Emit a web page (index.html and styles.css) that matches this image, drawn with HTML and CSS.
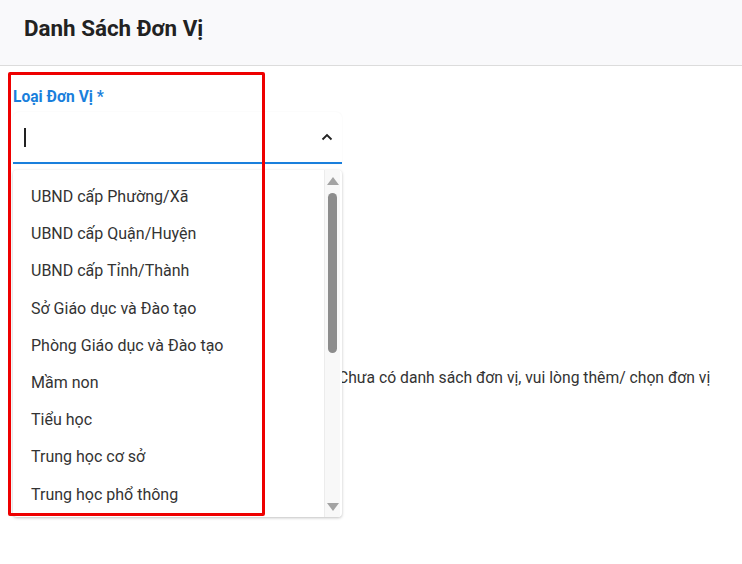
FILE: index.html
```html
<!DOCTYPE html>
<html lang="vi">
<head>
    <meta charset="utf-8">
    <title>Danh Sách Đơn Vị</title>
    <link rel="stylesheet" href="styles.css">
</head>
<body>
    <header class="page-header">
        <h1>Danh Sách Đơn Vị</h1>
    </header>
    <main class="content">
        <div class="filter">
            <label class="filter-label">Loại Đơn Vị *</label>
            <div class="select">
                <span class="caret"></span>
                <svg class="chevron" width="12" height="8" viewBox="0 0 12 8">
                    <path d="M1.5 6.5 L6 2 L10.5 6.5" fill="none" stroke="#222" stroke-width="1.8"/>
                </svg>
            </div>
            <div class="dropdown">
                <ul class="options">
                    <li>UBND cấp Phường/Xã</li>
                    <li>UBND cấp Quận/Huyện</li>
                    <li>UBND cấp Tỉnh/Thành</li>
                    <li>Sở Giáo dục và Đào tạo</li>
                    <li>Phòng Giáo dục và Đào tạo</li>
                    <li>Mầm non</li>
                    <li>Tiểu học</li>
                    <li>Trung học cơ sở</li>
                    <li>Trung học phổ thông</li>
                </ul>
                <div class="scrollbar">
                    <span class="arrow-up"></span>
                    <div class="track"><div class="thumb"></div></div>
                    <span class="arrow-down"></span>
                </div>
            </div>
            <div class="highlight"></div>
        </div>
        <p class="empty">Chưa có danh sách đơn vị, vui lòng thêm/ chọn đơn vị</p>
    </main>
</body>
</html>
```

FILE: styles.css
```css
html, body {
    height: 100%;
}
body {
    font-family: Roboto, "Liberation Sans", sans-serif;
    margin: 0;
    background: #fff;
    color: #333;
    min-height: 564px;
}
.page-header {
    height: 66px;
    box-sizing: border-box;
    background: #f9f9fb;
    border-bottom: 1px solid #dcdcdc;
    padding: 15px 0 0 24px;
}
.page-header h1 {
    margin: 0;
    font-size: 22.4px;
    line-height: 26px;
    font-weight: 700;
    color: #222;
}
.content {
    padding: 22px 13px 0;
}
.filter {
    position: relative;
    width: 329px;
}
.filter-label {
    display: block;
    font-size: 15.6px;
    line-height: 18px;
    font-weight: 700;
    color: #1a7fdc;
    margin-bottom: 6px;
}
.select {
    height: 50px;
    border-bottom: 2px solid #1a7fdc;
    border-radius: 6px 6px 0 0;
    box-shadow: 0 0 2px rgba(0,0,0,0.06);
    display: flex;
    align-items: center;
    justify-content: space-between;
    padding: 0 9px 0 11px;
}
.caret {
    width: 2px;
    height: 19px;
    background: #222;
}
.dropdown {
    position: absolute;
    top: 82px;
    left: 0;
    width: 329px;
    height: 347px;
    display: flex;
    background: #fff;
    border-radius: 4px;
    box-shadow: 0 1px 3px rgba(0,0,0,0.25);
    overflow: hidden;
}
.options {
    flex: 1;
    margin: 0;
    padding: 8px 0 0;
    list-style: none;
    overflow: hidden;
}
.options li {
    height: 37.2px;
    line-height: 37px;
    padding-left: 18px;
    font-size: 16px;
    color: #333;
}
.scrollbar {
    width: 15px;
    margin-right: 2px;
    background: #f8f8f8;
    border-left: 1px solid #ececec;
    display: flex;
    flex-direction: column;
    align-items: center;
    padding: 7px 0 6px;
}
.arrow-up, .arrow-down {
    width: 0;
    height: 0;
    border-left: 6px solid transparent;
    border-right: 6px solid transparent;
}
.arrow-up {
    border-bottom: 8px solid #a3a3a3;
}
.arrow-down {
    border-top: 8px solid #a3a3a3;
}
.track {
    flex: 1;
    width: 100%;
    display: flex;
    justify-content: center;
    padding-top: 8px;
}
.thumb {
    width: 9px;
    height: 160px;
    border-radius: 5px;
    background: #8c8c8c;
}
.highlight {
    position: absolute;
    top: -16px;
    left: -5px;
    width: 251px;
    height: 438px;
    border: 3px solid #ee0000;
    border-radius: 2px;
    pointer-events: none;
}
.empty {
    margin: 204px 0 0 325px;
    font-size: 15.7px;
    color: #333;
}
```
